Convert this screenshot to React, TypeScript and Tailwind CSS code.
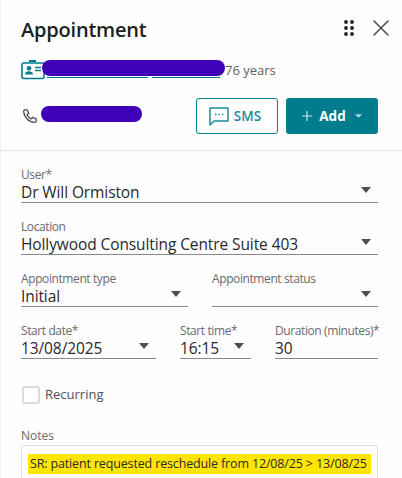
import React from "react";
import { X } from "lucide-react";

const font = { fontFamily: '"Open Sans", "Noto Sans", sans-serif' };

function Caret({ className = "" }: { className?: string }) {
  return (
    <svg width="10" height="6" viewBox="0 0 10 6" className={className}>
      <path d="M0 0h10L5 6z" fill="#514c58" />
    </svg>
  );
}

function Field({
  label,
  value,
  caret = true,
  className = "",
}: {
  label: string;
  value?: string;
  caret?: boolean;
  className?: string;
}) {
  return (
    <div className={className}>
      <div className="h-[15px] text-[12px] leading-[15px] tracking-[-0.4px] text-[#6b686e] whitespace-nowrap">{label}</div>
      <div className="flex h-[21px] items-center justify-between border-b border-[#8a868d] pb-px pr-[7px] text-[15.5px] leading-[20px] text-[#2a282c] whitespace-nowrap">
        <span className="tracking-[-0.1px]">{value}</span>
        {caret && <Caret className="mb-[4px]" />}
      </div>
    </div>
  );
}

export default function App() {
  return (
    <div className="h-[478px] w-[402px] overflow-hidden border-l border-[#f0f0f0] bg-[#fefefe]" style={font}>
      <div className="h-[151px] border-b border-[#e3e3e3] pl-5 pr-6">
        <div className="flex h-[58px] items-center justify-between pt-[2px]">
          <h1 className="text-[20px] font-semibold leading-none tracking-[-0.2px] text-[#201f21]">Appointment</h1>
          <div className="mb-[5px] flex items-center gap-[13px]">
            <svg width="10" height="16" viewBox="0 0 10 16" fill="#201f21">
              <circle cx="2" cy="2" r="1.9" />
              <circle cx="8" cy="2" r="1.9" />
              <circle cx="2" cy="8" r="1.9" />
              <circle cx="8" cy="8" r="1.9" />
              <circle cx="2" cy="14" r="1.9" />
              <circle cx="8" cy="14" r="1.9" />
            </svg>
            <X size={28} strokeWidth={1.3} className="mr-[-17px] text-[#514c58]" />
          </div>
        </div>

        <div className="relative flex h-[26px] items-center">
          <svg width="24" height="20" viewBox="0 0 24 20" fill="none" className="mb-[2px] shrink-0">
            <path d="M8 1h7" stroke="#007c8f" strokeWidth="2" />
            <rect x="1" y="3" width="22" height="15.500" rx="1.500" stroke="#007c8f" strokeWidth="1.600" />
            <circle cx="8" cy="8.300" r="2.300" fill="#007c8f" />
            <path d="M4 14.500c0-2.200 2-3.200 4-3.200s4 1 4 3.200z" fill="#007c8f" />
            <path d="M14 7.500h6M14 10.500h6" stroke="#007c8f" strokeWidth="1.600" />
          </svg>
          <div className="ml-[2px] flex w-[180px] shrink-0 gap-[4px] self-end pb-[6px]">
            <span className="h-px w-[101px] bg-[#007c8f]" />
            <span className="h-px w-[68px] bg-[#007c8f]" />
          </div>
          <span className="ml-[-2px] text-[13px] text-[#605e63]">76 years</span>
          <span className="absolute left-[21px] top-[2px] h-[16px] w-[183px] rounded-full bg-[#3f00b8]" />
        </div>

        <div className="mt-[14px] flex items-center justify-between">
          <div className="flex items-center">
            <svg width="16" height="16" viewBox="0 0 24 24" fill="none" stroke="#514c58" strokeWidth="2" className="ml-[1px]">
              <path d="M5 2.500 8 3l2 5-2.500 2c1.300 2.800 3.600 5.100 6.500 6.500l2-2.500 5 2 .5 3c0 1.500-1 2.500-2.500 2.500C10 21 3 14 2.500 5 2.500 3.500 3.500 2.500 5 2.500z" />
            </svg>
            <span className="mb-1 ml-[3px] h-4 w-[101px] rounded-full bg-[#3f00b8]" />
          </div>
          <div className="flex gap-[8px]">
            <button className="flex h-9 w-[82px] items-center justify-center gap-[5px] rounded-[3px] border border-[#007c8f] bg-white pr-1 text-[13.5px] font-semibold text-[#1c8a9b]">
              <svg width="20" height="20" viewBox="0 0 20 20" fill="none">
                <path d="M1 2h18v13H5l-4 4z" stroke="#1c8a9b" strokeWidth="1.500" strokeLinejoin="round" />
                <path d="M6 8.500h1.500M9.500 8.500H11M13 8.500h1.500" stroke="#1c8a9b" strokeWidth="1.500" />
              </svg>
              SMS
            </button>
            <button className="flex h-9 w-[92px] items-center justify-center rounded-[3px] bg-[#007c8f] text-[13.5px] font-bold text-white">
              <svg width="10" height="10" viewBox="0 0 11 11" className="mr-[7px]">
                <path d="M5.500 0v11M0 5.500h11" stroke="#cfe6ea" strokeWidth="1.300" />
              </svg>
              Add
              <svg width="7" height="4" viewBox="0 0 8 4" className="ml-[9px]">
                <path d="M0 0h8L4 4z" fill="#b7d9df" />
              </svg>
            </button>
          </div>
        </div>
      </div>

      <div className="flex flex-col gap-4 pl-5 pr-6 pt-[16px]">
        <Field label="User*" value="Dr Will Ormiston" />
        <Field label="Location" value="Hollywood Consulting Centre Suite 403" />
        <div className="flex gap-6">
          <Field label="Appointment type" value="Initial" className="w-[167px]" />
          <Field label="Appointment status" className="w-[166px]" />
        </div>
        <div className="flex">
          <Field label="Start date*" value="13/08/2025" className="w-[135px]" />
          <Field label="Start time*" value="16:15" className="ml-[24px] w-[71px]" />
          <Field label="Duration (minutes)*" value="30" caret={false} className="ml-[24px] w-[103px]" />
        </div>
      </div>

      <div className="flex flex-col pl-5 pr-6">
        <label className="mt-[27px] flex h-[18px] items-center gap-[5px] text-[13px] text-[#514c58]">
          <span className="ml-px h-[18px] w-[18px] rounded-[3px] border-2 border-[#dcdcdc] bg-white" />
          Recurring
        </label>
        <div className="mt-[24px] h-[15px] text-[12px] leading-[15px] text-[#6b686e]">Notes</div>
        <div className="mt-[2px] h-[60px] rounded-[3px] border border-[#dedede] bg-white px-[6px] pt-[4px]">
          <span className="inline-block h-[20px] w-[343px] whitespace-nowrap bg-[#ffe600] px-[2px] text-[12.5px] leading-[20px] tracking-[-0.15px] text-[#2a282c]">
            SR: patient requested reschedule from 12/08/25 &gt; 13/08/25
          </span>
        </div>
      </div>
    </div>
  );
}
